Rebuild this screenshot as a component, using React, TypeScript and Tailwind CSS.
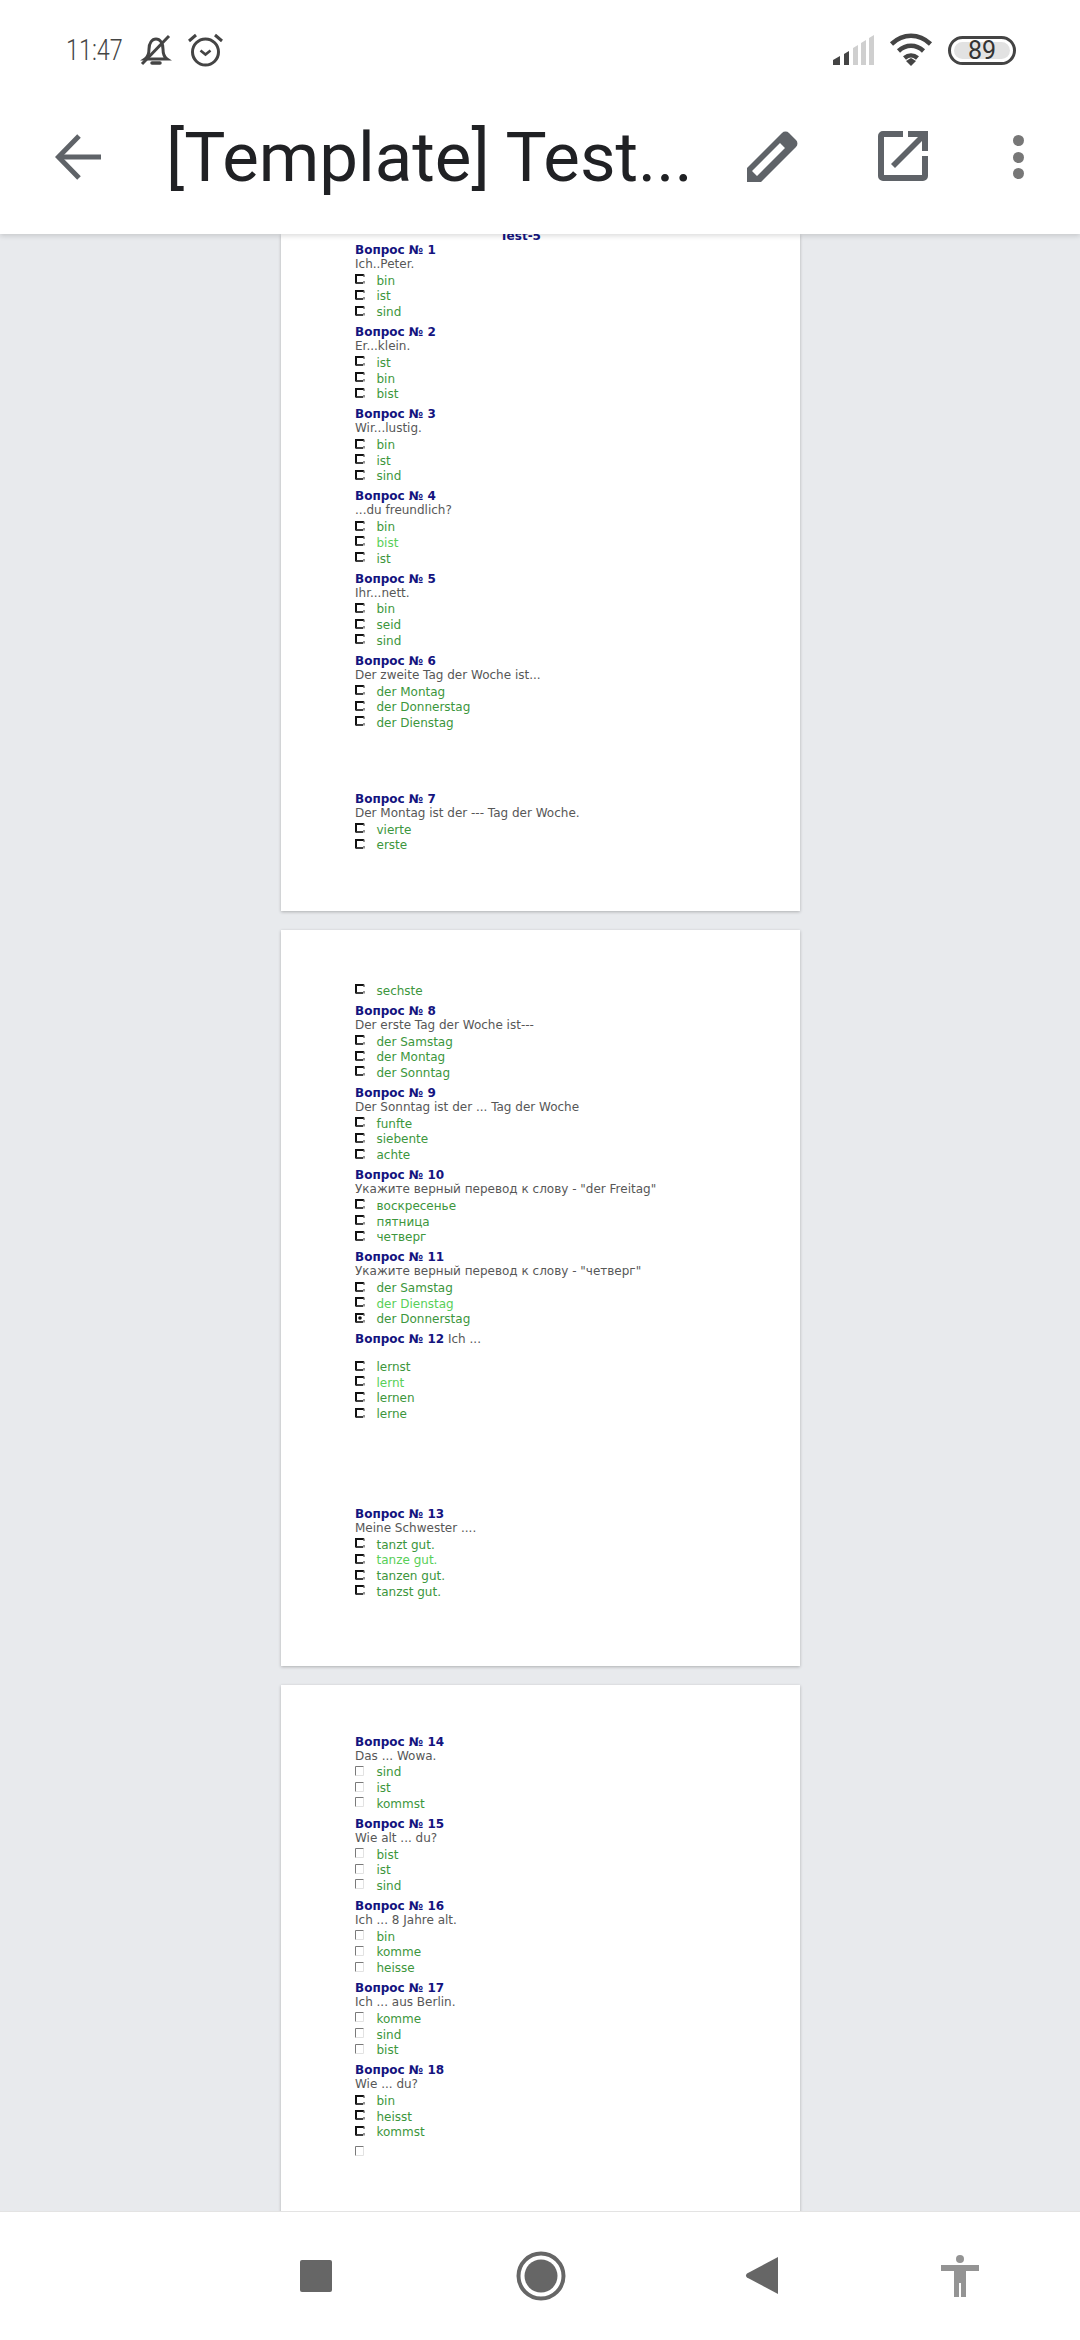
const sans = 'font-["DejaVu_Sans",sans-serif]';

type Opt = { t: string; light?: boolean; checked?: boolean };
type Box = 'dark' | 'plain';

function opts(...items: (string | Opt)[]): Opt[] {
  return items.map((i) => (typeof i === 'string' ? { t: i } : i));
}

function CheckBox({ kind, checked }: { kind: Box; checked?: boolean }) {
  if (kind === 'plain') {
    return (
      <svg width="10" height="10" viewBox="0 0 10 10" className="mb-[3px] shrink-0">
        <path d="M.5 9.5V.5h8" fill="none" stroke="#7a7a7a" />
        <path d="M8.5 1v8.5H1" fill="none" stroke="#e2e2e2" />
      </svg>
    );
  }
  return (
    <svg width="10" height="10" viewBox="0 0 10 10" className="mb-[3px] shrink-0">
      <path d="M1 9.5V1h8" fill="none" stroke="#111" strokeWidth="2" />
      <path d="M1 9h7" fill="none" stroke="#2a2a2a" strokeWidth="1.8" />
      <path d="M9 .5v2.5M9 7v2.5" fill="none" stroke="#666" strokeWidth="1.4" />
      {checked && <circle cx="5" cy="5" r="1.8" fill="#111" />}
    </svg>
  );
}

function Option({ o, kind }: { o: Opt; kind: Box }) {
  return (
    <div className="flex items-center h-[15.67px]">
      <div className="w-[21.5px] flex">
        <CheckBox kind={kind} checked={o.checked} />
      </div>
      <span className={o.light ? 'text-[#58cf58]' : 'text-[#3c963c]'}>{o.t}</span>
    </div>
  );
}

function Question({ n, text, options, kind = 'dark', className = 'mb-[5.2px]' }: { n: number; text: string; options: Opt[]; kind?: Box; className?: string }) {
  return (
    <div className={className}>
      <div className="h-[14px] leading-[14px] font-bold text-[#14147f]">Вопрос № {n}</div>
      <div className="h-[14px] leading-[14px] text-[#575757] mb-[2px]">{text}</div>
      {options.map((o) => (
        <Option key={o.t} o={o} kind={kind} />
      ))}
    </div>
  );
}

function StatusBar() {
  return (
    <div className="h-[100px] flex items-center pl-[66px] pr-[64px]">
      <span className='font-["Roboto",sans-serif] font-light text-[30px] leading-none text-[#444] w-[54px] scale-x-[0.78] origin-left whitespace-nowrap'>11:47</span>
      <svg width="34" height="34" viewBox="0 0 34 34" className="ml-[19px]" fill="none" stroke="#444" strokeWidth="3">
        <path d="M6 26c3-2 4-5 4-10 0-6 3-10 7-10s7 4 7 10c0 5 1 8 4 10z" />
        <path d="M3 31 30 3" />
        <path d="M13 30h8" strokeWidth="3.5" strokeLinecap="round" />
      </svg>
      <svg width="37" height="36" viewBox="0 0 37 36" className="ml-[14px]" fill="none" stroke="#444" strokeWidth="3">
        <circle cx="18.5" cy="20" r="13" />
        <path d="M13.5 18.5l5 4 5-4" strokeWidth="2.6" />
        <path d="M2 9l7-6M35 9l-7-6" />
      </svg>
      <div className="flex-1" />
      <svg width="42" height="30" viewBox="0 0 42 30">
        <path d="M0 30v-5l7-4v9z" fill="#444" />
        <path d="M11 30V19l5-3v14z" fill="#444" />
        <path d="M20 30V13l5-3v20zM28 30V8l5-3v25zM36 30V3l5-3v30z" fill="#cfcfcf" />
      </svg>
      <svg width="44" height="34" viewBox="0 0 44 34" className="ml-[14px]" fill="none" stroke="#444" strokeWidth="4.5">
        <path d="M2.5 11C14 0 30 0 41.5 11" />
        <path d="M9.5 18C17 11 27 11 34.5 18" />
        <path d="M15.5 25c4-3.5 9-3.5 13 0" />
        <path d="M17 28l5-3 5 3-5 5z" fill="#444" stroke="none" />
      </svg>
      <div className="ml-[15px] w-[68px] h-[29px] rounded-full border-[3px] border-[#444] flex items-center justify-center p-[3px]">
        <div className='w-full h-full rounded-full bg-[#e2e2e2] flex items-center justify-center font-["Roboto",sans-serif] text-[25px] leading-none text-[#333]'>89</div>
      </div>
    </div>
  );
}

function Toolbar() {
  return (
    <div className="h-[134px] flex items-start pt-[34px]">
      <svg width="46" height="46" viewBox="0 0 46 46" className="ml-[55px] shrink-0" fill="none" stroke="#5f6368" strokeWidth="5">
        <path d="M46 23H4" />
        <path d="M24 2 3.5 23 24 44" />
      </svg>
      <div className='ml-[65px] w-[532px] font-["Roboto",sans-serif] text-[69px] leading-none text-[#202124] whitespace-nowrap -mt-[11px]'>[Template] Test...</div>
      <svg width="52" height="52" viewBox="0 0 52 52" className="ml-[48px] shrink-0 -mt-[3px]" fill="#5f6368">
        <path fillRule="evenodd" d="M36 2a5 5 0 0 1 7 0l7 7a5 5 0 0 1 0 7L15 51H1V37zM34 12 6 40l5 5 28-28z" />
      </svg>
      <svg width="50" height="50" viewBox="0 0 50 50" className="ml-[80px] shrink-0 -mt-[3px]" fill="#5f6368">
        <path d="M5 0h20v6H6v38h38V25h6v20a5 5 0 0 1-5 5H5a5 5 0 0 1-5-5V5a5 5 0 0 1 5-5z" />
        <path d="M30 0h20v20h-6V10L17 37l-4-4L40 6H30z" />
      </svg>
      <div className="ml-[85px] flex flex-col gap-[5.5px] shrink-0 mt-[1px]">
        <div className="w-[11px] h-[11px] rounded-full bg-[#777]" />
        <div className="w-[11px] h-[11px] rounded-full bg-[#777]" />
        <div className="w-[11px] h-[11px] rounded-full bg-[#777]" />
      </div>
    </div>
  );
}

function BottomNav() {
  return (
    <div className="h-[129px] shrink-0 bg-white border-t border-[#e3e3e3] flex items-center pl-[300px] pb-[1px] relative z-10">
      <div className="w-[32px] h-[32px] rounded-[2px] bg-[#666]" />
      <svg width="50" height="50" viewBox="0 0 50 50" className="ml-[184px]">
        <circle cx="25" cy="25" r="22.5" fill="none" stroke="#666" strokeWidth="4" />
        <circle cx="25" cy="25" r="16.5" fill="#666" />
      </svg>
      <svg width="33" height="37" viewBox="0 0 33 37" className="ml-[179px]">
        <path d="M33 0v37L2 20.5a2.5 2.5 0 0 1 0-4z" fill="#666" />
      </svg>
      <svg width="38" height="42" viewBox="0 0 38 42" className="ml-[163px]" fill="#949494">
        <circle cx="19" cy="4" r="4" />
        <path d="M0 10h38v6H25v26h-5V28h-2v14h-5V16H0z" />
      </svg>
    </div>
  );
}

export default function App() {
  return (
    <div className={`w-[1080px] h-[2340px] flex flex-col overflow-hidden bg-[#e8eaed] ${sans} text-[12px]`}>
      <header className="h-[234px] shrink-0 bg-white relative z-10 shadow-[0_2px_5px_rgba(0,0,0,0.14)]">
        <StatusBar />
        <Toolbar />
      </header>

      <main className="flex-1 min-h-0 overflow-hidden flex flex-col items-center gap-[19px]">
        {/* page 1, scrolled a little under the toolbar */}
        <section className="w-[519px] shrink-0 bg-white shadow-[0_1px_3px_rgba(0,0,0,0.25)] px-[74.5px] pb-[58px]">
          <div className="-mt-[5px] h-[14px] leading-[14px] font-bold text-[#14147f] text-center mr-[39px]">Test-5</div>
          <Question n={1} text="Ich..Peter." options={opts('bin', 'ist', 'sind')} />
          <Question n={2} text="Er...klein." options={opts('ist', 'bin', 'bist')} />
          <Question n={3} text="Wir...lustig." options={opts('bin', 'ist', 'sind')} />
          <Question n={4} text="...du freundlich?" options={opts('bin', { t: 'bist', light: true }, 'ist')} />
          <Question n={5} text="Ihr...nett." options={opts('bin', 'seid', 'sind')} />
          <Question n={6} text="Der zweite Tag der Woche ist..." options={opts('der Montag', 'der Donnerstag', 'der Dienstag')} className="mb-[61px]" />
          <Question n={7} text="Der Montag ist der --- Tag der Woche." options={opts('vierte', 'erste')} className="" />
        </section>

        <section className="w-[519px] shrink-0 bg-white shadow-[0_1px_3px_rgba(0,0,0,0.25)] px-[74.5px] pt-[53px] pb-[66px]">
          <div className="mb-[5px]">
            <Option o={{ t: 'sechste' }} kind="dark" />
          </div>
          <Question n={8} text="Der erste Tag der Woche ist---" options={opts('der Samstag', 'der Montag', 'der Sonntag')} />
          <Question n={9} text="Der Sonntag ist der ... Tag der Woche" options={opts('funfte', 'siebente', 'achte')} />
          <Question n={10} text='Укажите верный перевод к слову - "der Freitag"' options={opts('воскресенье', 'пятница', 'четверг')} />
          <Question n={11} text='Укажите верный перевод к слову - "четверг"' options={opts('der Samstag', { t: 'der Dienstag', light: true }, { t: 'der Donnerstag', checked: true })} />
          <div className="mb-[85px]">
            <div className="h-[14px] leading-[14px] mb-[13px] text-[#575757]">
              <span className="font-bold text-[#14147f]">Вопрос № 12</span> Ich ...
            </div>
            {opts('lernst', { t: 'lernt', light: true }, 'lernen', 'lerne').map((o) => (
              <Option key={o.t} o={o} kind="dark" />
            ))}
          </div>
          <Question n={13} text="Meine Schwester ...." options={opts('tanzt gut.', { t: 'tanze gut.', light: true }, 'tanzen gut.', 'tanzst gut.')} className="" />
        </section>

        <section className="w-[519px] shrink-0 bg-white shadow-[0_1px_3px_rgba(0,0,0,0.25)] px-[74.5px] pt-[50px] pb-[60px]">
          <Question n={14} text="Das ... Wowa." options={opts('sind', 'ist', 'kommst')} kind="plain" />
          <Question n={15} text="Wie alt ... du?" options={opts('bist', 'ist', 'sind')} kind="plain" />
          <Question n={16} text="Ich ... 8 Jahre alt." options={opts('bin', 'komme', 'heisse')} kind="plain" />
          <Question n={17} text="Ich ... aus Berlin." options={opts('komme', 'sind', 'bist')} kind="plain" />
          <Question n={18} text="Wie ... du?" options={opts('bin', 'heisst', 'kommst')} />
          <div className="h-[15px] flex items-center">
            <CheckBox kind="plain" />
          </div>
        </section>
      </main>

      <BottomNav />
    </div>
  );
}
